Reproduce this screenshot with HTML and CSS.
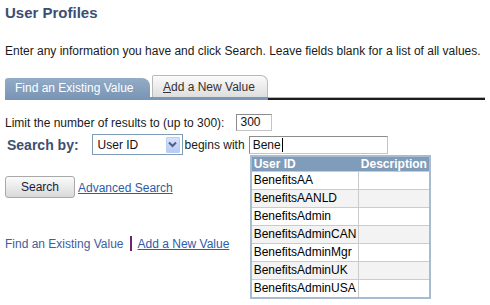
FILE: index.html
```html
<!DOCTYPE html>
<html lang="en">
<head>
    <meta charset="UTF-8">
    <title>User Profiles</title>
    <link rel="stylesheet" href="styles.css">
</head>
<body>
    <h1 class="page-title">User Profiles</h1>
    <p class="instructions">Enter any information you have and click Search. Leave fields blank for a list of all values.</p>

    <div class="tabbar">
        <div class="tabs">
            <div class="tab tab-active">Find an Existing Value</div>
            <div class="tab tab-idle"><u>A</u>dd a New Value</div>
        </div>
        <div class="tabbar-rest"></div>
    </div>

    <div class="limit-row">
        <span>Limit the number of results to (up to 300):</span>
        <div class="field limit-field">300</div>
    </div>

    <div class="search-row">
        <span class="search-label">Search by:</span>
        <div class="select">
            <span class="select-value">User ID</span>
            <span class="select-button">
                <svg width="9" height="7" viewBox="0 0 9 7"><path d="M1 1.5 L4.5 5 L8 1.5" fill="none" stroke="#4d6185" stroke-width="2"/></svg>
            </span>
        </div>
        <span class="begins">begins with</span>
        <div class="typeahead">
            <div class="field value-field">Bene<span class="caret"></span></div>
            <table class="suggest">
                <thead>
                    <tr><th class="col-id">User ID</th><th class="col-desc">Description</th></tr>
                </thead>
                <tbody>
                    <tr><td>BenefitsAA</td><td></td></tr>
                    <tr><td>BenefitsAANLD</td><td></td></tr>
                    <tr><td>BenefitsAdmin</td><td></td></tr>
                    <tr><td>BenefitsAdminCAN</td><td></td></tr>
                    <tr><td>BenefitsAdminMgr</td><td></td></tr>
                    <tr><td>BenefitsAdminUK</td><td></td></tr>
                    <tr><td>BenefitsAdminUSA</td><td></td></tr>
                </tbody>
            </table>
        </div>
    </div>

    <div class="button-row">
        <button class="search-button">Search</button>
        <a href="#" class="link">Advanced Search</a>
    </div>

    <div class="footer-links">
        <span class="current">Find an Existing Value</span>
        <span class="sep"></span>
        <a href="#" class="link">Add a New Value</a>
    </div>
</body>
</html>
```

FILE: styles.css
```css
body, html {
    margin: 0;
    padding: 0;
    height: 100%;
    background: #fff;
}

body {
    box-sizing: border-box;
    padding: 0 5px;
    font-family: "Liberation Sans", Arial, sans-serif;
    font-size: 12px;
    color: #1a1a1a;
}

.page-title {
    margin: 0;
    padding-top: 4px;
    font-size: 15px;
    line-height: 17px;
    font-weight: bold;
    color: #3c4e72;
}

.instructions {
    margin: 23px 0 0 0;
    line-height: 14px;
}

/* tabs */
.tabbar {
    display: flex;
    align-items: flex-end;
    margin-top: 17px;
}

.tabs {
    display: flex;
    align-items: flex-end;
    gap: 2px;
    border-bottom: 3px solid #7b97b7;
}

.tab {
    box-sizing: border-box;
    height: 21px;
    line-height: 20px;
    padding-left: 10px;
    white-space: nowrap;
}

.tab-active {
    width: 145px;
    margin-bottom: -3px;
    height: 22px;
    line-height: 21px;
    color: #fff;
    background: linear-gradient(#93acc7, #7894b4);
    border-radius: 3px 8px 0 0;
}

.tab-idle {
    width: 116px;
    height: 22px;
    padding-top: 1px;
    color: #333;
    background: linear-gradient(#fbfbfb, #dedede);
    border: 1px solid #b9b9b9;
    border-bottom: none;
    border-radius: 2px 7px 0 0;
}

.tabbar-rest {
    flex: 1;
    height: 3px;
    background: linear-gradient(#b5b5b5 1px, #1c1c1c 1px);
}

/* form rows */
.limit-row {
    display: flex;
    align-items: center;
    gap: 12px;
    margin-top: 14px;
}

.field {
    box-sizing: border-box;
    height: 17px;
    line-height: 15px;
    padding: 0 3px;
    border: 1px solid;
    border-color: #8c8c8c #c4c4c4 #c4c4c4 #8c8c8c;
    background: #fff;
    color: #111;
}

.limit-field {
    width: 36px;
}

.search-row {
    display: flex;
    align-items: center;
    margin-top: 3px;
    height: 21px;
}

.search-label {
    margin-left: 2px;
    font-size: 14px;
    font-weight: bold;
    color: #3c4e72;
}

.select {
    box-sizing: border-box;
    width: 91px;
    height: 21px;
    margin-left: 13px;
    display: flex;
    align-items: center;
    justify-content: space-between;
    border: 1px solid #7f9db9;
    padding: 0 2px 0 5px;
    color: #111;
}

.select-button {
    box-sizing: border-box;
    width: 14px;
    height: 16px;
    display: flex;
    align-items: center;
    justify-content: center;
    background: linear-gradient(#d6e2fd, #b9cbf6);
    border: 1px solid #bccdf4;
    border-radius: 1px;
}

.begins {
    margin-left: 2px;
}

.typeahead {
    position: relative;
    margin-left: 4px;
}

.value-field {
    width: 139px;
    height: 18px;
    line-height: 16px;
    display: flex;
    align-items: center;
}

.caret {
    display: inline-block;
    width: 1px;
    height: 14px;
    margin-left: 1px;
    background: #000;
}

/* suggestion dropdown */
.suggest {
    position: absolute;
    top: 19px;
    left: 1px;
    width: 178px;
    border-collapse: collapse;
    border: 2px solid #a9bbd0;
    background: #fff;
    font-size: 12px;
}

.suggest th {
    height: 14px;
    padding: 0 2px;
    text-align: left;
    color: #fff;
    background: #7f9cbb;
    font-weight: bold;
    line-height: 14px;
}

.suggest .col-id {
    width: 103px;
}

.suggest td {
    height: 17px;
    padding: 0 2px;
    border: 1px solid #cbcbcb;
    color: #000;
    line-height: 15px;
    white-space: nowrap;
}

.suggest tbody tr:nth-child(even) td {
    background: #f3f3f3;
}

/* buttons and links */
.button-row {
    display: flex;
    align-items: center;
    gap: 3px;
    margin-top: 21px;
}

.search-button {
    box-sizing: border-box;
    width: 70px;
    height: 22px;
    padding: 0;
    font-family: "Liberation Sans", Arial, sans-serif;
    font-size: 12px;
    color: #1c1c3a;
    background: linear-gradient(#fbfbfb, #d9d9d9);
    border: 1px solid #a9a9a9;
    border-radius: 3px;
}

.link {
    color: #2d5ca6;
    text-decoration: underline;
    margin-top: 2px;
}

.footer-links {
    display: flex;
    align-items: center;
    margin-top: 38px;
    line-height: 14px;
}

.current {
    color: #3e5e9c;
}

.sep {
    width: 2px;
    height: 15px;
    margin: 0 6px;
    background: #6c2470;
}

.footer-links .link {
    margin-top: 0;
}
```
